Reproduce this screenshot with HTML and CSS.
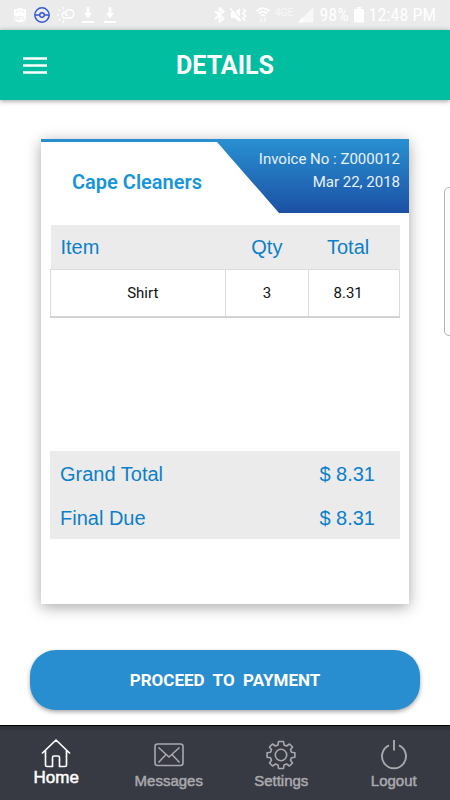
FILE: index.html
```html
<!DOCTYPE html>
<html lang="en">
<head>
<meta charset="utf-8">
<meta name="viewport" content="width=device-width, initial-scale=1">
<title>Details</title>
<link rel="stylesheet" href="styles.css">
</head>
<body>
<div class="status">
  <div class="status-left">
    <svg width="14" height="16" viewBox="0 0 14 16"><path d="M1 2Q4 3 7 .5Q10 3 13 2V12Q13 14 7 15.500Q1 14 1 12Z" fill="#fff"/><path d="M4 3V6M7 2.500V5.500M10 3V6" stroke="#ebebeb"/><text x="7" y="12.500" text-anchor="middle" class="badge-text">NFL</text></svg>
    <svg width="16" height="16" viewBox="0 0 16 16" fill="none" stroke="#3157cf" stroke-width="1.400"><circle cx="8" cy="8" r="7.200"/><circle cx="8" cy="8" r="2.300"/><path d="M1 8H5.500M10.500 8H15"/></svg>
    <svg width="18" height="16" viewBox="0 0 18 16" fill="none" stroke="#fff" stroke-width="1.500"><path d="M9 5A3 3 0 1 0 7.500 11H12.500A4.200 4.200 0 1 0 8.500 6Q8.800 8.500 11 8.500"/><path d="M0 8H2M1.800 2.500L3.300 4M6.500 0V2.500M1.800 13.500L3.300 12M6.500 16V13.500"/></svg>
    <svg width="15" height="16" viewBox="0 0 15 16" fill="#fff"><path d="M4.700 0H7.300V6H10L6 11.500L2 6H4.700ZM0 14H12V16H0Z"/></svg>
    <svg width="15" height="16" viewBox="0 0 15 16" fill="#fff"><path d="M4.700 0H7.300V6H10L6 11.500L2 6H4.700ZM0 14H12V16H0Z"/></svg>
  </div>
  <div class="status-right">
    <svg width="11" height="16" viewBox="0 0 11 16" fill="none" stroke="#fff" stroke-width="1.800"><path d="M1 4L9.500 11.500L5.500 15V1L9.500 4.500L1 12"/></svg>
    <svg width="17" height="16" viewBox="0 0 17 16"><path d="M1 5H4.500L10 1V15L4.500 11H1Z" fill="#fff"/><path d="M1 .5L12 13" stroke="#ebebeb" stroke-width="1.200"/><path d="M0 1L11 14" stroke="#fff" stroke-width="1.400"/><path d="M13 2L15.500 4L13 6.500L15.500 9L13 11.500L15.500 14" fill="none" stroke="#fff" stroke-width="1.600"/></svg>
    <svg class="wifi" width="14" height="16" viewBox="0 0 14 16" fill="none" stroke="#fff" stroke-width="1.700"><path d="M.5 4Q7-1.500 13.500 4M2.700 6.500Q7 2.800 11.300 6.500M5 9Q7 7 9 9"/><path d="M5 11V15M3.700 13.500L5 15L6.300 13.500M9 15V11M7.700 12.500L9 11L10.300 12.500" stroke-width="1" opacity=".7"/></svg>
    <span class="network">4GE</span>
    <svg width="16" height="16" viewBox="0 0 16 16"><path d="M15.500 0V15.500H0Z" fill="#f8f8f8"/><path d="M5 10.500V15.500H0Z" fill="#fff"/></svg>
    <span class="percent">98%</span>
    <svg width="10" height="16" viewBox="0 0 10 16"><path d="M3 0H7V2H10V15.500H0V2H3Z" fill="#fff"/></svg>
    <span class="time">12:48 PM</span>
  </div>
</div>
<header class="appbar">
  <button class="menu" type="button" aria-label="Menu"><svg width="24" height="18" viewBox="0 0 24 18"><path d="M0 1.500H24M0 8.500H24M0 15.500H24" stroke="#fff" stroke-width="2.600"/></svg></button>
  <h1>DETAILS</h1>
</header>
<main>
  <section class="card">
    <div class="card-head">
      <h2>Cape Cleaners</h2>
      <svg class="ribbon" width="192" height="71" viewBox="0 0 192 71"><defs><linearGradient id="blue" x2="0" y2="1"><stop stop-color="#288ed0"/><stop offset="1" stop-color="#1c50a4"/></linearGradient></defs><path d="M0 0H192V71H62Z" fill="url(#blue)"/></svg>
      <p class="invoice">Invoice No : Z000012<br>Mar 22, 2018</p>
    </div>
    <div class="items">
      <table>
        <colgroup><col class="col-item"><col class="col-qty"><col></colgroup>
        <thead><tr><th scope="col">Item</th><th scope="col">Qty</th><th scope="col">Total</th></tr></thead>
        <tbody><tr><td>Shirt</td><td>3</td><td>8.31</td></tr></tbody>
      </table>
    </div>
    <dl class="summary">
      <div><dt>Grand Total</dt><dd>$ 8.31</dd></div>
      <div><dt>Final Due</dt><dd>$ 8.31</dd></div>
    </dl>
  </section>
  <button class="pay" type="button">PROCEED&nbsp; TO&nbsp; PAYMENT</button>
</main>
<nav>
  <a class="active" href="#"><svg width="30" height="30" viewBox="0 0 30 30" fill="none" stroke="#fff" stroke-width="1.700" stroke-linejoin="round" stroke-linecap="round"><path d="M1.500 15L15 2L28.500 15M4.500 12.500V27Q4.500 28.500 6 28.500H11.500V19.500Q11.500 18 13 18H17Q18.500 18 18.500 19.500V28.500H24Q25.500 28.500 25.500 27V12.500"/></svg><span>Home</span></a>
  <a href="#"><svg width="30" height="30" viewBox="0 0 30 30" fill="none" stroke="#a9a9ad" stroke-width="1.600"><rect x="1" y="4" width="28" height="21.500" rx="2.500"/><path d="M4.500 7.500L15 17L25.500 7.500M4.500 22.500L12 14.500M25.500 22.500L18 14.500"/></svg><span>Messages</span></a>
  <a href="#"><svg width="30" height="30" viewBox="0 0 30 30" fill="none" stroke="#a9a9ad" stroke-width="1.600" stroke-linejoin="round"><path d="M12.500 1.500H17.500L18 5L20.500 6L23.500 4L26.500 7L24.500 9.800L25.500 12.300L28.900 12.800V17.200L25.500 17.700L24.500 20.200L26.500 23L23.500 26L20.500 24L18 25L17.500 28.500H12.500L12 25L9.500 24L6.500 26L3.500 23L5.500 20.200L4.500 17.700L1.100 17.200V12.800L4.500 12.300L5.500 9.800L3.500 7L6.500 4L9.500 6L12 5Z"/><circle cx="15" cy="15" r="5.700"/></svg><span>Settings</span></a>
  <a href="#"><svg width="30" height="30" viewBox="0 0 30 30" fill="none" stroke="#a9a9ad" stroke-width="1.900"><path d="M15 0V10.500M10 5.400A12 12 0 1 0 20 5.400"/></svg><span>Logout</span></a>
</nav>
<div class="edge-handle"></div>
</body>
</html>
```
FILE: styles.css
```css
* { box-sizing: border-box; }
body {
  margin: 0;
  min-height: 100vh;
  display: flex;
  flex-direction: column;
  position: relative;
  overflow-x: hidden;
  background: #fff;
  font-family: Roboto, sans-serif;
}
h1, h2, p, dl, dd { margin: 0; }
svg { display: block; flex: none; }
button { border: 0; font-family: inherit; cursor: pointer; }

.status {
  height: 30px;
  padding: 0 14px 0 13px;
  display: flex;
  align-items: center;
  justify-content: space-between;
  background: #ebebeb;
  color: #fff;
}
.status-left, .status-right { display: flex; align-items: center; }
.status-left { gap: 7px; }
.status-right { gap: 5px; }
.wifi { margin-left: 4px; }
.badge-text { font: bold 6px Roboto, sans-serif; fill: #ebebeb; }
.network { align-self: flex-start; font-size: 10px; line-height: 26px; color: #f8f8f8; }
.percent, .time { font-family: "Roboto Condensed", Roboto, sans-serif; font-size: 18px; line-height: 30px; }

.appbar {
  position: relative;
  z-index: 1;
  height: 70px;
  padding-top: 2px;
  display: grid;
  grid-template-columns: 70px 1fr 70px;
  align-items: center;
  background: #00be9f;
  box-shadow: 0 1px 5px rgba(0, 0, 0, .4);
}
.menu { padding: 0 23px; background: none; }
.appbar h1 { color: #fff; font-size: 25px; line-height: 30px; font-weight: 700; text-align: center; }

main {
  flex: 1;
  display: flex;
  flex-direction: column;
  padding: 39px 30px 15px;
}
.card {
  flex: 1;
  display: flex;
  flex-direction: column;
  margin: 0 11px 46px;
  padding-bottom: 65px;
  background: #fff;
  border-top: 3px solid #288ed0;
  box-shadow: 0 3px 14px rgba(0, 0, 0, .35);
}
.card-head {
  position: relative;
  height: 71px;
  display: flex;
  justify-content: space-between;
}
.card-head h2 { padding: 28px 0 0 31px; color: #1795d8; font-size: 20px; line-height: 24px; font-weight: 600; }
.ribbon { position: absolute; top: 0; right: 0; }
.invoice { position: relative; padding: 6px 9px 0 0; color: #e8f2fb; font-size: 15px; line-height: 23px; text-align: right; }
.items { flex: 1; padding: 12px 9px; }
table { width: 100%; table-layout: fixed; border-collapse: collapse; }
.col-item { width: 50%; }
.col-qty { width: 24%; }
th, .summary { font-family: "Liberation Sans", sans-serif; font-size: 20px; font-weight: 400; color: #0b80c9; }
thead { background: #ebebeb; }
th { height: 44px; padding: 2px 0 0; }
th:first-child { padding-left: 10px; text-align: left; }
th:last-child, td:last-child { padding-right: 12px; }
td { height: 48px; padding: 0; border: 1px solid #dcdcdc; border-bottom: 2px solid #d2d2d2; text-align: center; font-size: 15px; color: #111; }
td:first-child { padding-left: 10px; }
.summary { margin: 0 9px; background: #ebebeb; }
.summary div { height: 44px; padding: 2px 25px 0 10px; display: flex; align-items: center; justify-content: space-between; }

.pay {
  height: 60px;
  border-radius: 26px;
  background: #288ed0;
  color: #fff;
  font-size: 17px;
  font-weight: 700;
  box-shadow: 0 2px 4px rgba(0, 0, 0, .35);
}

nav {
  height: 75px;
  display: grid;
  grid-template-columns: repeat(4, 1fr);
  background: #373943;
  border-top: 1px solid #000;
  box-shadow: inset 0 4px #30323a;
}
nav a {
  display: flex;
  flex-direction: column;
  align-items: center;
  gap: 1px;
  padding-top: 14px;
  color: #a9a9ad;
  font-family: "Liberation Sans", sans-serif;
  font-size: 15px;
  line-height: 20px;
  -webkit-text-stroke: 0.5px currentColor;
  text-decoration: none;
}
nav a.active { padding-top: 12px; gap: 0; color: #fff; font-size: 17px; }

.edge-handle {
  position: absolute;
  top: 187px;
  right: -4px;
  width: 10px;
  height: 149px;
  border: 1px solid #b4b4b4;
  border-radius: 8px;
  background: #fcfcfc;
}
```
